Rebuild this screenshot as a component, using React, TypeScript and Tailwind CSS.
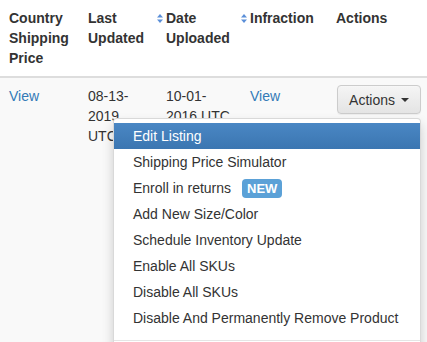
import React from "react";

function SortIcon() {
  return (
    <svg width="6" height="9" viewBox="0 0 6 9" className="shrink-0">
      <path d="M3 0 L6 3.5 L0 3.5 Z" fill="#5b8fd8" />
      <path d="M3 9 L6 5.5 L0 5.5 Z" fill="#5b8fd8" />
    </svg>
  );
}

const items = [
  "Shipping Price Simulator",
  "__enroll__",
  "Add New Size/Color",
  "Schedule Inventory Update",
  "Enable All SKUs",
  "Disable All SKUs",
  "Disable And Permanently Remove Product",
];

export default function App() {
  return (
    <div
      className="w-[427px] h-[342px] overflow-hidden bg-white text-[14px] leading-[20px] text-[#333]"
      style={{ fontFamily: '"Liberation Sans", Arial, Helvetica, sans-serif' }}
    >
      <table className="table-fixed border-collapse w-[427px]">
        <colgroup>
          <col className="w-[80px]" />
          <col className="w-[78px]" />
          <col className="w-[84px]" />
          <col className="w-[86px]" />
          <col className="w-[99px]" />
        </colgroup>
        <thead>
          <tr className="border-b-2 border-[#ddd]">
            <th className="text-left align-top font-bold pl-[9px] pr-2 pt-2 pb-2 h-[76px]">
              Country Shipping Price
            </th>
            <th className="text-left align-top font-bold px-2 pt-2 pb-2">
              Last Updated
            </th>
            <th className="text-left align-top font-bold px-2 pt-2 pb-2">
              <div className="flex items-start">
                <span className="-ml-[9px] mr-[3px] mt-[6px]">
                  <SortIcon />
                </span>
                <span>
                  Date
                  <br />
                  Uploaded
                </span>
              </div>
            </th>
            <th className="text-left align-top font-bold px-2 pt-2 pb-2">
              <div className="flex items-start">
                <span className="-ml-[9px] mr-[3px] mt-[6px]">
                  <SortIcon />
                </span>
                <span>Infraction</span>
              </div>
            </th>
            <th className="text-left align-top font-bold px-2 pt-2 pb-2">Actions</th>
          </tr>
        </thead>
        <tbody>
          <tr className="bg-[#f9f9f9] h-[300px]">
            <td className="align-top pl-[9px] pr-2 pt-2">
              <a className="text-[#337ab7]">View</a>
            </td>
            <td className="align-top px-2 pt-2">
              08-13-
              <br />
              2019
              <br />
              UTC
            </td>
            <td className="align-top px-2 pt-2">
              10-01-
              <br />
              2016 UTC
            </td>
            <td className="align-top px-2 pt-2">
              <a className="text-[#337ab7]">View</a>
            </td>
            <td className="align-top pl-2 pr-[6px] pt-[7px]">
              <div className="relative flex justify-end">
                <button className="h-[29px] flex items-center gap-[6px] px-[11px] rounded-[4px] border border-[#ccc] bg-gradient-to-b from-[#f5f5f5] to-[#e4e4e4] text-[#333] shadow-[inset_0_1px_0_rgba(255,255,255,0.2),0_1px_1px_rgba(0,0,0,0.05)]">
                  <span>Actions</span>
                  <span className="w-0 h-0 border-l-[4px] border-r-[4px] border-t-[4px] border-l-transparent border-r-transparent border-t-[#333]" />
                </button>
                <div className="absolute right-0 top-[33px] w-[308px] bg-white border border-[rgba(0,0,0,0.15)] rounded-[4px] shadow-[0_6px_12px_rgba(0,0,0,0.175)] py-[4px] z-10">
                  <div className="h-[26px] px-[19px] flex items-center whitespace-nowrap text-white bg-gradient-to-b from-[#4a87c4] to-[#3b76b1]">
                    Edit Listing
                  </div>
                  {items.map((it) =>
                    it === "__enroll__" ? (
                      <div key={it} className="h-[26px] px-[19px] flex items-center whitespace-nowrap">
                        <span>Enroll in returns</span>
                        <span className="ml-[11px] bg-[#5ba1d7] text-white font-bold text-[13px] leading-[13px] px-[5px] pt-[3px] pb-[3px] rounded-[4px]">
                          NEW
                        </span>
                      </div>
                    ) : (
                      <div key={it} className="h-[26px] px-[19px] flex items-center whitespace-nowrap">
                        {it}
                      </div>
                    )
                  )}
                  <div className="h-px bg-[#e5e5e5] my-[9px]" />
                  <div className="h-[26px]" />
                </div>
              </div>
            </td>
          </tr>
        </tbody>
      </table>
    </div>
  );
}
